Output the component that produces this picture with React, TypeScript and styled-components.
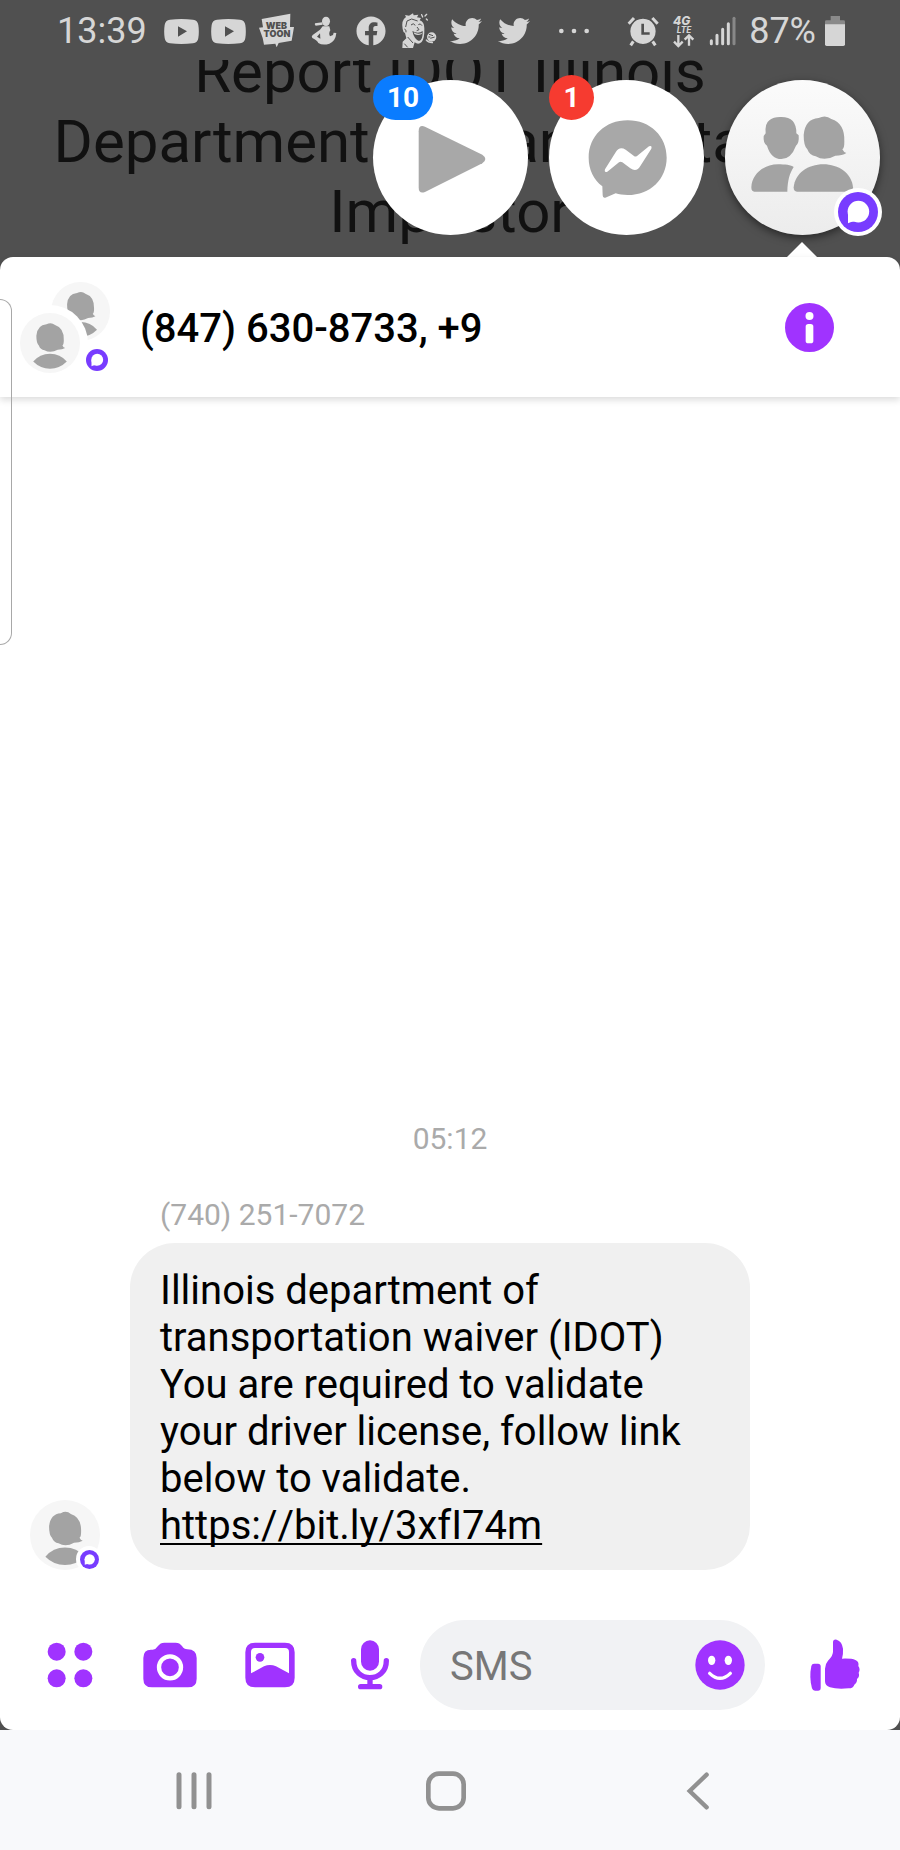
import React from 'react';
import styled, { createGlobalStyle } from 'styled-components';
import { FaFacebook, FaTwitter } from 'react-icons/fa';

const ACCENT = '#a033ff';
const CHAT = '#783cff';
const STATUS = '#d6d6d6';

const GlobalStyle = createGlobalStyle`
  * { box-sizing: border-box; }
  body {
    margin: 0;
    background: #505050;
    font-family: Roboto, "Liberation Sans", sans-serif;
    color: #000;
  }
  button { font-family: inherit; }
  h1, h2, p { margin: 0; font-weight: 400; }
  svg { display: block; flex: none; }
`;

const Screen = styled.div`
  display: flex;
  flex-direction: column;
  min-height: 100vh;
  background: #505050;
`;

/* ---------- status bar ---------- */

const StatusBar = styled.header`
  display: flex;
  align-items: center;
  height: 60px;
  padding: 2px 55px 0 57px;
  color: ${STATUS};
`;

const StatusText = styled.span`
  font-size: 36px;
  line-height: 44px;
`;

const Notifications = styled.div`
  display: grid;
  grid-template-columns: repeat(8, 1fr);
  justify-items: center;
  align-items: center;
  width: 380px;
  margin: 0 20px 0 11px;
`;

const SystemIcons = styled.div`
  display: flex;
  align-items: center;
  margin-left: auto;
`;

const SystemIcon = styled.span<{ $after: number }>`
  margin-right: ${(p) => p.$after}px;
`;

/* ---------- dimmed page and chat heads ---------- */

const Backdrop = styled.section`
  position: relative;
  display: flex;
  flex-direction: column;
  justify-content: flex-end;
  height: 197px;
  padding: 0 40px 10px;
`;

const ClippedTitle = styled.div`
  display: flex;
  flex-direction: column;
  justify-content: flex-end;
  height: 187px;
  overflow: hidden;
`;

const PageTitle = styled.h1`
  font-size: 60px;
  line-height: 70px;
  text-align: center;
  color: #111;
`;

const ChatHeads = styled.nav`
  position: absolute;
  top: 20px;
  right: 20px;
  display: flex;
  gap: 21px;
`;

const ChatHead = styled.button<{ $active?: boolean }>`
  position: relative;
  width: 155px;
  height: 155px;
  padding: 0;
  border: 0;
  border-radius: 50%;
  background: ${(p) => (p.$active ? 'linear-gradient(#fbfbfb, #ececec)' : '#fff')};
  box-shadow: ${(p) => (p.$active ? '0 3px 8px rgba(0, 0, 0, 0.5)' : 'none')};
`;

const Count = styled.span<{ $color: string }>`
  position: absolute;
  top: -5px;
  left: 0;
  min-width: 45px;
  height: 45px;
  padding: 0 14px;
  border-radius: 23px;
  background: ${(p) => p.$color};
  color: #fff;
  font-size: 28px;
  font-weight: 700;
  line-height: 45px;
  text-align: center;
`;

const HeadMark = styled.span`
  position: absolute;
  right: -2px;
  bottom: -1px;
  padding: 4px;
  border-radius: 50%;
  background: #fff;
`;

const Pointer = styled.span`
  position: absolute;
  top: 162px;
  left: 62px;
  border: 15px solid transparent;
  border-top-width: 0;
  border-bottom-color: #fff;
`;

/* ---------- conversation sheet ---------- */

const Sheet = styled.main`
  position: relative;
  display: flex;
  flex: 1;
  flex-direction: column;
  border-radius: 13px;
  background: #fff;
`;

const EdgeHandle = styled.span`
  position: absolute;
  top: 42px;
  left: 0;
  width: 12px;
  height: 346px;
  border: 1px solid #a8a8a8;
  border-left: 0;
  border-radius: 0 14px 14px 0;
`;

const SheetHeader = styled.header`
  display: flex;
  align-items: center;
  height: 140px;
  padding: 0 66px 0 20px;
  border-radius: 13px 13px 0 0;
  box-shadow: 0 3px 7px rgba(0, 0, 0, 0.14);
`;

const ThreadTitle = styled.h2`
  flex: 1;
  margin-left: 28px;
  padding-top: 4px;
  font-size: 40px;
  font-weight: 500;
  line-height: 48px;
`;

const PlainButton = styled.button`
  display: flex;
  align-items: center;
  justify-content: center;
  padding: 0;
  border: 0;
  background: none;
`;

const Messages = styled.section`
  display: flex;
  flex: 1;
  flex-direction: column;
  justify-content: flex-end;
  padding: 30px;
`;

const Caption = styled.p`
  font-size: 30px;
  line-height: 36px;
  color: #aaa;
`;

const Timestamp = styled(Caption)`
  margin-bottom: 40px;
  text-align: center;
`;

const Sender = styled(Caption)`
  margin: 0 0 10px 130px;
`;

const MessageRow = styled.article`
  display: flex;
  align-items: flex-end;
  gap: 30px;
`;

const Bubble = styled.p`
  width: 620px;
  padding: 24px 30px 21px;
  border-radius: 45px;
  background: #f0f0f0;
  font-size: 40px;
  line-height: 47px;
  white-space: pre-line;
`;

const MessageLink = styled.a`
  color: inherit;
  font-kerning: none;
  text-decoration: underline;
  text-decoration-thickness: 2px;
  text-decoration-skip-ink: none;
  text-underline-offset: 4px;
`;

const Composer = styled.form`
  display: flex;
  align-items: center;
  padding: 20px 0 20px 20px;
`;

const ToolButton = styled(PlainButton)`
  width: 100px;
  height: 90px;
`;

const LikeButton = styled(PlainButton)`
  width: 135px;
  height: 90px;
  padding-left: 5px;
`;

const Field = styled.label`
  display: flex;
  flex: 1;
  align-items: center;
  min-width: 0;
  height: 90px;
  padding: 0 15px 0 30px;
  border-radius: 45px;
  background: #f1f2f4;
`;

const FieldInput = styled.input`
  flex: 1;
  min-width: 0;
  padding: 4px 0 0;
  border: 0;
  outline: 0;
  background: none;
  color: #000;
  font: 400 40px/48px Roboto, "Liberation Sans", sans-serif;
  &::placeholder { color: #777; opacity: 1; }
`;

const NavBar = styled.nav`
  display: grid;
  grid-template-columns: repeat(3, 1fr);
  height: 120px;
  padding: 2px 76px 0 68px;
  background: #f8f9fb;
`;

/* ---------- drawings ---------- */

type IconProps = { box: string; width: number; height?: number; children: React.ReactNode };

const Icon = ({ box, width, height = width, children }: IconProps) => (
  <svg width={width} height={height} viewBox={box} aria-hidden="true">
    {children}
  </svg>
);

const ChatMark = ({ x = 0, y = 0, size }: { x?: number; y?: number; size: number }) => (
  <svg x={x} y={y} width={size} height={size} viewBox="0 0 100 100" aria-hidden="true">
    <circle cx="50" cy="50" r="50" fill={CHAT} />
    <circle cx="51" cy="49" r="27" fill="#fff" />
    <path d="M25 48 V78 Q36 72 51 75 Z" fill="#fff" />
  </svg>
);

const HEAD =
  'M1107 354 Q1128 343 1145 357 Q1186 370 1184 425 Q1184 445 1178 448 Q1182 457 1190 459 Q1178 467 1157 467 Q1125 485 1098 469 Q1080 467 1073 448 Q1062 438 1062 405 Q1066 357 1107 354Z';

const Person = ({ x = 0, y = 0, size }: { x?: number; y?: number; size: number }) => (
  <svg x={x} y={y} width={size} height={size} viewBox="0 0 100 100">
    <circle cx="50" cy="50" r="50" fill="#f6f6f6" />
    <path d={HEAD} transform="translate(-371 -114) scale(0.375)" fill="#a3a3a3" />
    <path d="M22 81 Q33 68 50 68 Q67 68 78 81 Q66 93 50 93 Q34 93 22 81Z" fill="#a3a3a3" />
  </svg>
);

const GroupAvatar = () => (
  <Icon box="0 0 92 92" width={92}>
    <Person x={31} y={1} size={59} />
    <circle cx="30" cy="62" r="38" fill="#fff" />
    <Person x={0} y={32} size={60} />
    <circle cx="77" cy="79" r="15" fill="#fff" />
    <ChatMark x={66} y={68} size={22} />
  </Icon>
);

const SenderAvatar = () => (
  <Icon box="0 0 70 70" width={70}>
    <Person size={70} />
    <circle cx="59" cy="59" r="13" fill="#fff" />
    <ChatMark x={50} y={50} size={19} />
  </Icon>
);

const YouTubeIcon = () => (
  <Icon box="0 0 105 75" width={35} height={25}>
    <path
      fillRule="evenodd"
      fill="currentColor"
      d="M18 2 Q52 -2 87 2 Q101 3 103 18 Q106 37 103 57 Q101 72 87 73 Q52 77 18 73 Q4 72 2 57 Q-1 37 2 18 Q4 3 18 2Z M42 22 V53 L69 37Z"
    />
  </Icon>
);

const WebtoonIcon = () => (
  <Icon box="776 38 108 108" width={36}>
    <path
      fill="currentColor"
      d="M787 56 L873 40 L872 80 L884 80 L877 121 L838 128 L832 141 L828 130 L794 133 L790 113 L779 82 L791 81Z"
    />
    <g fill="#505050" fontFamily="Inter, sans-serif" fontWeight="900" textAnchor="middle">
      <text x="831" y="87" fontSize="27">WEB</text>
      <text x="833" y="110" fontSize="27">TOON</text>
    </g>
  </Icon>
);

const FigureIcon = () => (
  <Icon box="920 38 108 108" width={36}>
    <g fill="currentColor">
      <ellipse cx="980" cy="63" rx="12" ry="14" />
      <path d="M969 66 L947 69 Q945 73 949 76 L970 73Z" />
      <path d="M970 78 H990 L993 90 Q987 100 992 108 L1001 104 L1003 97 L1011 98 Q1009 122 990 130 Q970 136 957 128 Q954 120 939 113 Q935 109 940 104 L962 88Z" />
    </g>
    <path d="M962 99 L953 109 L963 115Z" fill="#505050" />
  </Icon>
);

const FaceIcon = () => (
  <Icon box="1202 36 108 108" width={36}>
    <path
      fill="currentColor"
      d="M1207 84 Q1202 58 1217 48 L1214 42 L1226 44 L1238 37 L1240 43 L1254 41 L1250 49 L1262 51 L1258 58 Q1272 62 1272 82 Q1273 112 1264 123 Q1254 133 1243 124 L1238 141 H1206 L1207 122 L1218 112 L1214 96 Q1208 94 1207 84Z"
    />
    <g fill="none" stroke="#505050" strokeWidth="3">
      <path d="M1216 78 L1220 60 L1234 54 L1252 60" />
      <path d="M1212 84 Q1219 86 1217 94 M1222 108 L1238 126 M1212 128 L1222 139" />
      <path d="M1232 72 Q1239 64 1245 73 M1254 71 Q1260 65 1265 74" />
      <path d="M1250 78 L1256 86 L1249 89" />
    </g>
    <path d="M1236 90 Q1254 100 1267 90 Q1268 118 1256 120 Q1241 114 1236 90Z" fill="#505050" />
    <path d="M1240 94 Q1254 102 1265 95 L1264 99 Q1253 105 1242 99Z" fill="currentColor" />
    <g fill="none" stroke="currentColor" strokeWidth="4" strokeLinecap="round">
      <path d="M1264 41 L1267 48 M1279 40 L1274 45 M1278 54 L1281 57" />
    </g>
    <circle cx="1294" cy="108" r="14" fill="currentColor" />
    <path d="M1286 100 L1298 104 M1290 112 L1303 108 M1284 108 H1290" stroke="#505050" strokeWidth="3" />
    <path d="M1277 116 Q1284 126 1298 125" fill="none" stroke="currentColor" strokeWidth="4" />
  </Icon>
);

const MoreDots = () => (
  <Icon box="0 0 96 18" width={32} height={6}>
    <g fill="currentColor">
      <circle cx="10" cy="9" r="7" />
      <circle cx="48" cy="9" r="7" />
      <circle cx="86" cy="9" r="7" />
    </g>
  </Icon>
);

const AlarmIcon = () => (
  <Icon box="529 43 96 93" width={32} height={31}>
    <path
      fill="currentColor"
      fillRule="evenodd"
      d="M577 51 a38 38 0 1 1 -0.1 0Z M572 66 V99 H597 V92 H580 V66Z"
    />
    <path
      d="M534 66 L550 49 M621 66 L605 49"
      stroke="currentColor"
      strokeWidth="9"
    />
    <path d="M548 119 L540 131 M606 119 L614 131" stroke="currentColor" strokeWidth="9" />
  </Icon>
);

const LteIcon = () => (
  <Icon box="662 42 72 99" width={24} height={33}>
    <g fill="currentColor" fontFamily="Inter, sans-serif" fontStyle="italic" textAnchor="middle">
      <text x="691" y="71" fontSize="36" fontWeight="800">4G</text>
      <text x="698" y="95" fontSize="25" fontWeight="700">LTE</text>
    </g>
    <path
      d="M681 102 V134 M668 122 L681 135 L694 122 M713 134 V104 M700 116 L713 103 L726 116"
      fill="none"
      stroke="currentColor"
      strokeWidth="7"
    />
  </Icon>
);

const SignalIcon = () => (
  <Icon box="774 48 81 90" width={27} height={30}>
    <g stroke="currentColor" strokeWidth="9" strokeLinecap="round">
      <path d="M781 122 V131 M798 106 V131 M815 88 V131 M832 71 V131" />
      <path d="M849 55 V131" stroke="#888" />
    </g>
  </Icon>
);

const BatteryIcon = () => (
  <Icon box="1122 45 60 90" width={20} height={30}>
    <path d="M1139 45 H1167 V58 H1178 Q1182 58 1182 62 V72 H1122 V62 Q1122 58 1126 58 H1139Z" fill="#8a8a8a" />
    <path d="M1122 70 H1182 V130 Q1182 135 1177 135 H1127 Q1122 135 1122 130Z" fill="currentColor" />
  </Icon>
);

const PlayIcon = () => (
  <Icon box="1120 240 465 465" width={155}>
    <path
      d="M1257 394 Q1257 373 1276 380 L1448 464 Q1466 477 1448 490 L1276 576 Q1257 583 1257 562Z"
      fill="#a8a8a8"
    />
  </Icon>
);

const MessengerIcon = () => (
  <Icon box="298 240 465 465" width={155}>
    <path
      fill="#a8a8a8"
      d="M534 361 C602 361 651 409 651 473 C651 537 602 585 534 585 C520 585 508 583 498 580 L467 593 Q459 595 459 586 L458 559 C432 538 417 509 417 473 C417 409 466 361 534 361Z"
    />
    <path
      fill="#fff"
      d="M466 508 L498 457 Q509 438 528 449 L553 468 Q557 471 562 468 L598 439 Q608 435 605 446 L572 498 Q561 517 542 505 L518 487 Q513 484 508 487 L473 515 Q463 519 466 508Z"
    />
  </Icon>
);

const GroupIcon = () => (
  <Icon box="826 240 465 465" width={155}>
    <g fill="#a3a3a3">
      <path d="M960 360 Q972 350 995 351 Q1041 351 1040 400 L1047 406 Q1049 430 1039 437 Q1024 477 995 477 Q964 477 952 437 Q940 430 942 408 L948 400 Q945 370 960 360Z" />
      <path d="M905 562 C907 520 945 493 985 493 C1005 493 1025 495 1032 501 C1020 520 1014 540 1013 575 H914 Q905 575 905 562Z" />
      <path d={HEAD} />
      <path d="M1042 575 Q1032 575 1032 562 C1036 520 1075 493 1121 493 C1167 493 1206 520 1210 562 Q1210 575 1200 575Z" />
    </g>
  </Icon>
);

const InfoIcon = () => (
  <Icon box="0 0 147 147" width={49}>
    <circle cx="73.5" cy="73.5" r="73.5" fill={ACCENT} />
    <circle cx="73.5" cy="39" r="12" fill="#fff" />
    <rect x="62" y="63" width="23" height="58" rx="8" fill="#fff" />
  </Icon>
);

const AppsIcon = () => (
  <Icon box="120 135 180 180" width={60}>
    <g fill={ACCENT}>
      <circle cx="170" cy="185" r="27" />
      <circle cx="250" cy="185" r="27" />
      <circle cx="170" cy="265" r="27" />
      <circle cx="250" cy="265" r="27" />
    </g>
  </Icon>
);

const CameraIcon = () => (
  <Icon box="420 135 180 180" width={60}>
    <path
      fill={ACCENT}
      d="M430 204 Q430 179 453 179 H458 Q468 178 474 168 Q481 158 493 158 H527 Q539 158 546 168 Q552 178 562 178 Q590 178 590 204 V266 Q590 292 564 292 H456 Q430 292 430 266Z"
    />
    <circle cx="510" cy="232" r="33" fill={ACCENT} stroke="#fff" strokeWidth="13" />
  </Icon>
);

const PhotoIcon = () => (
  <Icon box="720 135 180 180" width={60}>
    <path
      fill={ACCENT}
      fillRule="evenodd"
      d="M765 158 H855 Q884 158 884 187 V263 Q884 292 855 292 H765 Q736 292 736 263 V187 Q736 158 765 158Z M753 250 L792 229 Q810 221 828 229 L867 250 V186 Q867 174 855 174 H765 Q753 174 753 186Z"
    />
    <circle cx="780" cy="202" r="13" fill={ACCENT} />
  </Icon>
);

const MicIcon = () => (
  <Icon box="1020 135 180 180" width={60}>
    <rect x="1083" y="151" width="54" height="91" rx="27" fill={ACCENT} />
    <g fill="none" stroke={ACCENT} strokeWidth="16" strokeLinecap="round">
      <path d="M1061 212 C1061 280 1159 280 1159 212 M1082 290 H1139" />
      <path d="M1110 268 V288" />
    </g>
  </Icon>
);

const SmileIcon = () => (
  <Icon box="720 135 180 180" width={60}>
    <circle cx="810" cy="225" r="74" fill={ACCENT} />
    <ellipse cx="785" cy="211" rx="11" ry="14" fill="#fff" />
    <ellipse cx="835" cy="211" rx="11" ry="14" fill="#fff" />
    <path d="M779 250 Q810 280 841 250" fill="none" stroke="#fff" strokeWidth="10" strokeLinecap="round" />
  </Icon>
);

const LikeIcon = () => (
  <Icon box="1065 131 180 180" width={60}>
    <g fill={ACCENT}>
      <path d="M1092 217 H1104 Q1112 217 1112 225 V290 Q1112 298 1104 298 H1095 Q1088 298 1086 291 Q1077 258 1084 224 Q1086 217 1092 217Z" />
      <path d="M1149 151 Q1150 143 1160 145 Q1176 150 1179 172 Q1180 190 1176 202 Q1205 201 1216 206 Q1228 211 1225 224 Q1232 234 1226 244 Q1230 256 1221 263 Q1222 274 1213 280 Q1210 291 1196 291 Q1160 294 1140 288 Q1125 283 1125 270 V232 Q1125 218 1134 208 Q1150 193 1149 180Z" />
    </g>
  </Icon>
);

const NAV_STROKE = { fill: 'none', stroke: '#919191', strokeLinecap: 'round' as const };

const RecentsIcon = () => (
  <Icon box="0 0 120 120" width={40}>
    <path d="M15 11 V107 M60 11 V107 M105 11 V107" strokeWidth="15" {...NAV_STROKE} />
  </Icon>
);

const HomeIcon = () => (
  <Icon box="0 0 120 120" width={40}>
    <rect x="7" y="8" width="106" height="104" rx="32" strokeWidth="14" {...NAV_STROKE} />
  </Icon>
);

const BackIcon = () => (
  <Icon box="0 0 120 120" width={40}>
    <path d="M86 11 L35 60 L86 109" strokeWidth="13" {...NAV_STROKE} />
  </Icon>
);

/* ---------- screen ---------- */

export default function App() {
  return (
    <>
      <GlobalStyle />
      <Screen>
        <StatusBar>
          <StatusText>13:39</StatusText>
          <Notifications>
            <YouTubeIcon />
            <YouTubeIcon />
            <WebtoonIcon />
            <FigureIcon />
            <FaFacebook size={30} />
            <FaceIcon />
            <FaTwitter size={32} />
            <FaTwitter size={32} />
          </Notifications>
          <MoreDots />
          <SystemIcons>
            <SystemIcon $after={13}><AlarmIcon /></SystemIcon>
            <SystemIcon $after={13}><LteIcon /></SystemIcon>
            <SystemIcon $after={13}><SignalIcon /></SystemIcon>
            <SystemIcon $after={9}><StatusText>87%</StatusText></SystemIcon>
            <BatteryIcon />
          </SystemIcons>
        </StatusBar>

        <Backdrop>
          <ClippedTitle>
            <PageTitle>Report IDOT Illinois Department of Transportation Impostor</PageTitle>
          </ClippedTitle>
          <ChatHeads aria-label="Chats">
            <ChatHead type="button" aria-label="Play, 10 new">
              <PlayIcon />
              <Count $color="#0a7cff">10</Count>
            </ChatHead>
            <ChatHead type="button" aria-label="Messenger, 1 new">
              <MessengerIcon />
              <Count $color="#f63b30">1</Count>
            </ChatHead>
            <ChatHead type="button" aria-label="Group conversation" $active>
              <GroupIcon />
              <HeadMark><ChatMark size={40} /></HeadMark>
              <Pointer />
            </ChatHead>
          </ChatHeads>
        </Backdrop>

        <Sheet>
          <SheetHeader>
            <GroupAvatar />
            <ThreadTitle>(847) 630-8733, +9</ThreadTitle>
            <PlainButton type="button" aria-label="Conversation details">
              <InfoIcon />
            </PlainButton>
          </SheetHeader>
          <EdgeHandle />

          <Messages>
            <Timestamp>05:12</Timestamp>
            <Sender>(740) 251-7072</Sender>
            <MessageRow>
              <SenderAvatar />
              <Bubble>
                {'Illinois department of transportation waiver (IDOT)\nYou are required to validate your driver license, follow link below to validate.\n'}
                <MessageLink href="#">https://bit.ly/3xfI74m</MessageLink>
              </Bubble>
            </MessageRow>
          </Messages>

          <Composer>
            <ToolButton type="button" aria-label="More tools"><AppsIcon /></ToolButton>
            <ToolButton type="button" aria-label="Camera"><CameraIcon /></ToolButton>
            <ToolButton type="button" aria-label="Photos"><PhotoIcon /></ToolButton>
            <ToolButton type="button" aria-label="Voice message"><MicIcon /></ToolButton>
            <Field>
              <FieldInput type="text" placeholder="SMS" aria-label="Message" />
              <PlainButton type="button" aria-label="Emoji"><SmileIcon /></PlainButton>
            </Field>
            <LikeButton type="button" aria-label="Like"><LikeIcon /></LikeButton>
          </Composer>
        </Sheet>

        <NavBar aria-label="System">
          <PlainButton type="button" aria-label="Recent apps"><RecentsIcon /></PlainButton>
          <PlainButton type="button" aria-label="Home"><HomeIcon /></PlainButton>
          <PlainButton type="button" aria-label="Back"><BackIcon /></PlainButton>
        </NavBar>
      </Screen>
    </>
  );
}
